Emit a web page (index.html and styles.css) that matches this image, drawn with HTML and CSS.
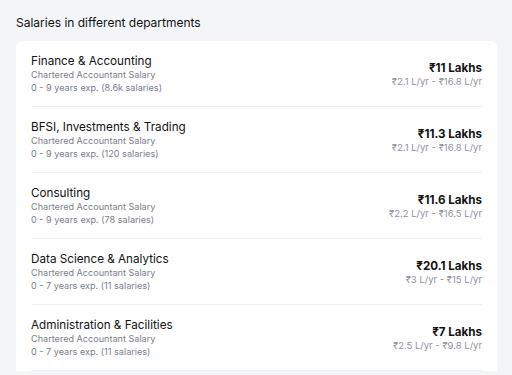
FILE: index.html
```html
<!DOCTYPE html>
<html>
<head>
<meta charset="utf-8">
<link rel="stylesheet" href="styles.css">
</head>
<body>
<div class="page">
  <h2 class="heading">Salaries in different departments</h2>
  <div class="card">
    <div class="row">
      <div class="left">
        <div class="title">Finance &amp; Accounting</div>
        <div class="sub">Chartered Accountant Salary</div>
        <div class="sub">0 - 9 years exp. (8.6k salaries)</div>
      </div>
      <div class="right">
        <div class="amount">₹11 Lakhs</div>
        <div class="range">₹2.1 L/yr - ₹16.8 L/yr</div>
      </div>
    </div>
    <div class="row">
      <div class="left">
        <div class="title">BFSI, Investments &amp; Trading</div>
        <div class="sub">Chartered Accountant Salary</div>
        <div class="sub">0 - 9 years exp. (120 salaries)</div>
      </div>
      <div class="right">
        <div class="amount">₹11.3 Lakhs</div>
        <div class="range">₹2.1 L/yr - ₹16.8 L/yr</div>
      </div>
    </div>
    <div class="row">
      <div class="left">
        <div class="title">Consulting</div>
        <div class="sub">Chartered Accountant Salary</div>
        <div class="sub">0 - 9 years exp. (78 salaries)</div>
      </div>
      <div class="right">
        <div class="amount">₹11.6 Lakhs</div>
        <div class="range">₹2.2 L/yr - ₹16.5 L/yr</div>
      </div>
    </div>
    <div class="row">
      <div class="left">
        <div class="title">Data Science &amp; Analytics</div>
        <div class="sub">Chartered Accountant Salary</div>
        <div class="sub">0 - 7 years exp. (11 salaries)</div>
      </div>
      <div class="right">
        <div class="amount">₹20.1 Lakhs</div>
        <div class="range">₹3 L/yr - ₹15 L/yr</div>
      </div>
    </div>
    <div class="row">
      <div class="left">
        <div class="title">Administration &amp; Facilities</div>
        <div class="sub">Chartered Accountant Salary</div>
        <div class="sub">0 - 7 years exp. (11 salaries)</div>
      </div>
      <div class="right">
        <div class="amount">₹7 Lakhs</div>
        <div class="range">₹2.5 L/yr - ₹9.8 L/yr</div>
      </div>
    </div>
  </div>
</div>
</body>
</html>
```
FILE: styles.css
```css
html, body {
  margin: 0;
  padding: 0;
  background: #f4f5f8;
  font-family: Inter, "Noto Sans", sans-serif;
}
.page {
  padding: 15px 15px 0 16px;
}
.heading {
  margin: 0 0 10px 0;
  font-size: 12px;
  line-height: 16px;
  font-weight: 400;
  color: #121212;
}
.card {
  background: #ffffff;
  border-radius: 6px 6px 0 0;
  padding: 0 15px;
}
.row {
  display: flex;
  justify-content: space-between;
  align-items: center;
  padding: 13px 0 12px 0;
  border-bottom: 1px solid #eff0f4;
}
.title {
  font-size: 11.7px;
  line-height: 14px;
  color: #121212;
}
.sub {
  font-size: 9.1px;
  line-height: 13px;
  color: #7a7e8c;
}
.right {
  text-align: right;
}
.amount {
  font-size: 11.6px;
  line-height: 14px;
  font-weight: 700;
  color: #121212;
}
.range {
  font-size: 9.5px;
  line-height: 13px;
  color: #8d92a3;
}
```
